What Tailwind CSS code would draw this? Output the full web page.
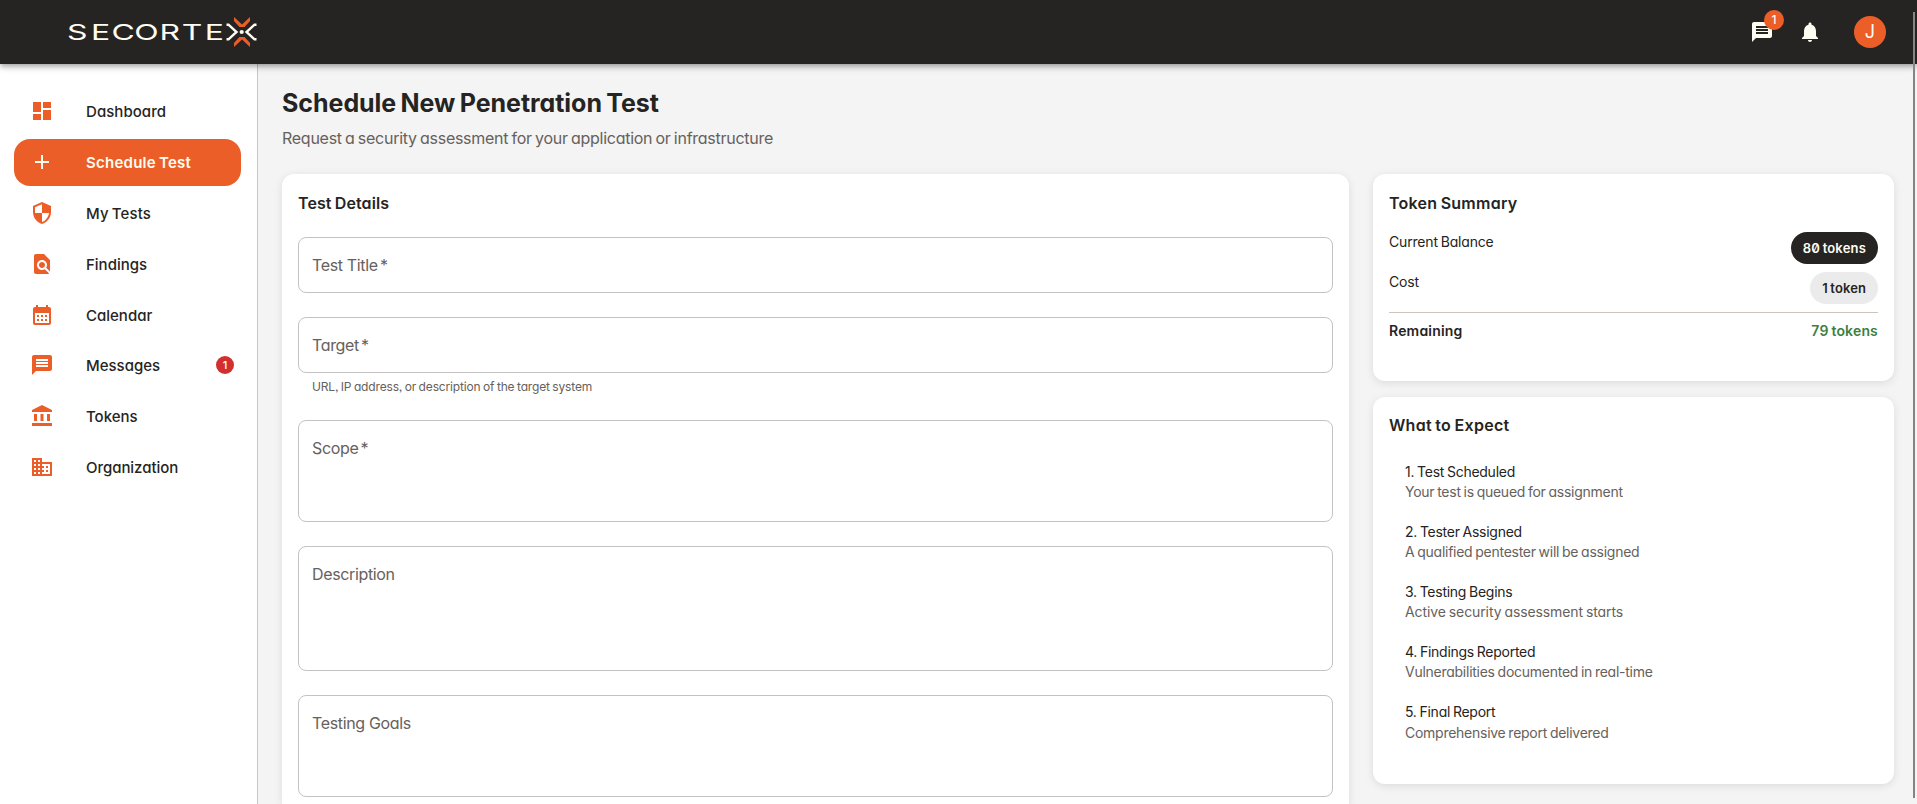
<!DOCTYPE html>
<html lang="en">
<head>
    <meta charset="UTF-8">
    <meta name="viewport" content="width=device-width, initial-scale=1.0">
    <title>SECORTEX - Schedule New Penetration Test</title>
    <script src="https://cdn.jsdelivr.net/npm/@tailwindcss/browser@4"></script>
    <style>
        /* Single-storey "a", slashed zero, slightly tight word gaps */
        body {
            font-family: 'Inter', 'Liberation Sans', sans-serif;
            font-feature-settings: 'cv11', 'ss03', 'zero';
        }
        h1, h2, p, span {
            word-spacing: -0.06em;
        }
    </style>
</head>
<body class="h-screen overflow-hidden flex flex-col bg-[#f4f4f4] text-[#252422]">

    <!-- Top bar -->
    <header class="relative z-10 h-16 shrink-0 flex items-center justify-between bg-[#252422] pl-[66px] pr-[31px] shadow-[0_2px_4px_-1px_rgba(0,0,0,0.2),0_4px_5px_rgba(0,0,0,0.14),0_1px_10px_rgba(0,0,0,0.12)]">
        <svg class="w-[193px] h-8" viewBox="0 0 193 32" aria-label="SECORTEX">
            <text x="7.7 23.8 39.5 55.5 71.6 87 102.3" y="24" transform="scale(1.45 1)" text-anchor="middle" font-family="Inter" font-size="22" font-weight="400" fill="#fffcf2">SECORTE</text>
            <g fill="none" stroke="#fffcf2" stroke-width="2.4">
                <path d="M160.500 8.700h2l8 7.300-8 7.300h-2"/>
                <path d="M190.500 8.700h-2l-8 7.300 8 7.300h2"/>
            </g>
            <circle cx="175.700" cy="16" r="2.100" fill="#fffcf2"/>
            <path fill="#eb5e28" d="M168 1l8 7.500L184 1v4l-5.500 6h-5L168 5zM168 31l8-7.500 8 7.500v-4l-5.500-6h-5L168 27z"/>
        </svg>

        <div class="flex items-center">
            <div class="relative mr-6">
                <svg class="size-6 fill-[#fffcf2]" viewBox="0 0 24 24"><path d="M20 2H4c-1.100 0-1.990.9-1.990 2L2 22l4-4h14c1.100 0 2-.9 2-2V4c0-1.100-.9-2-2-2zm-2 12H6v-2h12v2zm0-3H6V9h12v2zm0-3H6V6h12v2z"/></svg>
                <span class="absolute -top-[10px] left-[14px] size-5 rounded-full bg-[#eb5e28] text-[#fffcf2] text-xs font-medium flex items-center justify-center">1</span>
            </div>
            <svg class="size-6 mr-8 fill-[#fffcf2]" viewBox="0 0 24 24"><path d="M12 22c1.100 0 2-.9 2-2h-4c0 1.100.89 2 2 2zm6-6v-5c0-3.070-1.640-5.640-4.500-6.320V4c0-.83-.67-1.500-1.500-1.500s-1.500.67-1.500 1.500v.68C7.630 5.360 6 7.920 6 11v5l-2 2v1h16v-1l-2-2z"/></svg>
            <div class="size-8 rounded-full bg-[#eb5e28] text-[#fffcf2] text-lg leading-none flex items-center justify-center">J</div>
        </div>
    </header>

    <div class="flex flex-1 min-h-0">

        <!-- Sidebar -->
        <aside class="w-[258px] shrink-0 bg-white border-r border-[#ccc5b9] pt-6 pl-[14px] pr-4">
            <nav class="flex flex-col gap-1 text-[15px] font-medium">
                <a class="flex items-center h-[47px] pl-4">
                    <svg class="size-6 mr-8 mb-px fill-[#eb5e28]" viewBox="0 0 24 24"><path d="M3 13h8V3H3v10zm0 8h8v-6H3v6zm10 0h8V11h-8v10zm0-18v6h8V3h-8z"/></svg>
                    <span class="mt-0.5 tracking-[0.05px]">Dashboard</span>
                </a>
                <a class="flex items-center h-[47px] pl-4 rounded-2xl bg-[#eb5e28] text-[#fffcf2] font-semibold">
                    <svg class="size-6 mr-8 mb-px fill-[#fffcf2]" viewBox="0 0 24 24"><path d="M19 13h-6v6h-2v-6H5v-2h6V5h2v6h6v2z"/></svg>
                    <span class="mt-0.5 tracking-[0.25px]">Schedule Test</span>
                </a>
                <a class="flex items-center h-[47px] pl-4">
                    <svg class="size-6 mr-8 mb-px fill-[#eb5e28]" viewBox="0 0 24 24"><path d="M12 1 3 5v6c0 5.550 3.840 10.740 9 12 5.160-1.260 9-6.450 9-12V5l-9-4zm0 10.990h7c-.53 4.120-3.280 7.790-7 8.940V12H5V6.300l7-3.110v8.800z"/></svg>
                    <span class="mt-0.5 tracking-[0.1px]">My Tests</span>
                </a>
                <a class="flex items-center h-[47px] pl-4">
                    <svg class="size-6 mr-8 mb-px fill-[#eb5e28]" viewBox="0 0 24 24"><path d="M20 19.590V8l-6-6H6c-1.100 0-1.990.9-1.990 2L4 20c0 1.100.89 2 1.990 2H18c.45 0 .85-.15 1.190-.4l-4.430-4.430c-.8.52-1.740.83-2.760.83-2.760 0-5-2.240-5-5s2.240-5 5-5 5 2.240 5 5c0 1.020-.31 1.960-.83 2.750L20 19.590zM9 13c0 1.660 1.340 3 3 3s3-1.340 3-3-1.340-3-3-3-3 1.340-3 3z"/></svg>
                    <span class="mt-0.5">Findings</span>
                </a>
                <a class="flex items-center h-[47px] pl-4">
                    <svg class="size-6 mr-8 mb-px fill-[#eb5e28]" viewBox="0 0 24 24"><path d="M19 4h-1V2h-2v2H8V2H6v2H5c-1.110 0-1.990.9-1.990 2L3 20c0 1.100.89 2 2 2h14c1.100 0 2-.9 2-2V6c0-1.100-.9-2-2-2zm0 16H5V10h14v10zM9 14H7v-2h2v2zm4 0h-2v-2h2v2zm4 0h-2v-2h2v2zm-8 4H7v-2h2v2zm4 0h-2v-2h2v2zm4 0h-2v-2h2v2z"/></svg>
                    <span class="mt-0.5">Calendar</span>
                </a>
                <a class="flex items-center h-[46px] pl-4 pr-[7px]">
                    <svg class="size-6 mr-8 mb-0.5 fill-[#eb5e28]" viewBox="0 0 24 24"><path d="M20 2H4c-1.100 0-1.990.9-1.990 2L2 22l4-4h14c1.100 0 2-.9 2-2V4c0-1.100-.9-2-2-2zm-2 12H6v-2h12v2zm0-3H6V9h12v2zm0-3H6V6h12v2z"/></svg>
                    <span>Messages</span>
                    <span class="ml-auto mb-0.5 size-[18px] rounded-full bg-[#d32f2f] text-white text-[11px] flex items-center justify-center">1</span>
                </a>
                <a class="flex items-center h-[47px] pl-4">
                    <svg class="size-6 mr-8 mb-px fill-[#eb5e28]" viewBox="0 0 24 24"><path d="M4 10h3v7H4zM10.500 10h3v7h-3zM2 19h20v3H2zM17 10h3v7h-3zM12 1 2 6v2h20V6z"/></svg>
                    <span class="mt-0.5">Tokens</span>
                </a>
                <a class="flex items-center h-[47px] pl-4">
                    <svg class="size-6 mr-8 mb-px fill-[#eb5e28]" viewBox="0 0 24 24"><path d="M12 7V3H2v18h20V7H12zM6 19H4v-2h2v2zm0-4H4v-2h2v2zm0-4H4V9h2v2zm0-4H4V5h2v2zm4 12H8v-2h2v2zm0-4H8v-2h2v2zm0-4H8V9h2v2zm0-4H8V5h2v2zm10 12h-8v-2h2v-2h-2v-2h2v-2h-2V9h8v10zm-2-8h-2v2h2v-2zm0 4h-2v2h2v-2z"/></svg>
                    <span class="mt-0.5 tracking-[-0.05px]">Organization</span>
                </a>
            </nav>
        </aside>

        <!-- Page content -->
        <main class="flex-1 min-w-0 pl-6 pr-[23px] pt-[23px]">
            <h1 class="text-[25px] leading-8 font-bold tracking-[-0.04px]">Schedule New Penetration Test</h1>
            <p class="mt-[7px] text-base leading-6 tracking-[-0.27px] text-[#66615c]">Request a security assessment for your application or infrastructure</p>

            <div class="mt-6 flex items-start gap-6">

                <!-- Test details form -->
                <section class="w-[1067px] h-[630px] shrink-0 bg-white rounded-t-xl p-4 shadow-[0_2px_8px_rgba(0,0,0,0.1)]">
                    <h2 class="text-base leading-[26px] font-semibold tracking-[0.1px]">Test Details</h2>
                    <div class="mt-[21px] text-base leading-6 tracking-[-0.35px] text-[#66615c]">
                        <div class="h-14 border border-[#c3c3c3] rounded-lg px-[13px] py-[15px]">Test Title <span class="-ml-0.5">*</span></div>
                        <div class="mt-6 h-14 border border-[#c3c3c3] rounded-lg px-[13px] py-[15px]">Target <span class="-ml-0.5">*</span></div>
                        <p class="mt-1 px-[14px] text-xs leading-5 tracking-[-0.15px]">URL, IP address, or description of the target system</p>
                        <div class="mt-[23px] h-[102px] border border-[#c3c3c3] rounded-lg px-[13px] py-[15px]">Scope <span class="-ml-0.5">*</span></div>
                        <div class="mt-6 h-[125px] border border-[#c3c3c3] rounded-lg px-[13px] py-[15px]">Description</div>
                        <div class="mt-6 h-[102px] border border-[#c3c3c3] rounded-lg px-[13px] py-[15px]">Testing Goals</div>
                    </div>
                </section>

                <div class="flex-1 flex flex-col gap-4">

                    <!-- Token summary -->
                    <section class="h-[207px] bg-white rounded-xl p-4 shadow-[0_2px_8px_rgba(0,0,0,0.1)] text-sm leading-5 tracking-[-0.18px]">
                        <h2 class="text-base leading-[26px] font-semibold tracking-[0.25px]">Token Summary</h2>
                        <div class="mt-4 flex justify-between">
                            <span>Current Balance</span>
                            <span class="h-8 px-3 rounded-2xl bg-[#252422] text-[#fffcf2] text-[13px] font-semibold tracking-[0.18px] flex items-center">80 tokens</span>
                        </div>
                        <div class="mt-2 flex justify-between">
                            <span>Cost</span>
                            <span class="h-8 px-3 rounded-2xl bg-[#ebebeb] text-[13px] font-semibold tracking-[0.1px] flex items-center">1 token</span>
                        </div>
                        <div class="mt-2 pt-2 border-t border-[#ccc5b9] flex justify-between font-semibold tracking-[0.18px]">
                            <span>Remaining</span>
                            <span class="text-[#3d7f41]">79 tokens</span>
                        </div>
                    </section>

                    <!-- What to expect -->
                    <section class="h-[387px] bg-white rounded-xl px-4 pt-[15px] shadow-[0_2px_8px_rgba(0,0,0,0.1)]">
                        <h2 class="text-base leading-[26px] font-semibold tracking-[0.3px]">What to Expect</h2>
                        <ol class="mt-6 px-4 flex flex-col gap-5 text-sm leading-5 tracking-[-0.26px]">
                            <li>
                                <p>1. Test Scheduled</p>
                                <p class="text-[#66615c]">Your test is queued for assignment</p>
                            </li>
                            <li>
                                <p>2. Tester Assigned</p>
                                <p class="text-[#66615c]">A qualified pentester will be assigned</p>
                            </li>
                            <li>
                                <p>3. Testing Begins</p>
                                <p class="text-[#66615c] tracking-[-0.1px]">Active security assessment starts</p>
                            </li>
                            <li>
                                <p>4. Findings Reported</p>
                                <p class="text-[#66615c]">Vulnerabilities documented in real-time</p>
                            </li>
                            <li>
                                <p>5. Final Report</p>
                                <p class="mt-px text-[#66615c]">Comprehensive report delivered</p>
                            </li>
                        </ol>
                    </section>
                </div>
            </div>
        </main>
    </div>

    <!-- Scrollbar thumb -->
    <div class="fixed z-20 top-3 bottom-1.5 right-0.5 w-0.5 bg-[#858585]"></div>
</body>
</html>
